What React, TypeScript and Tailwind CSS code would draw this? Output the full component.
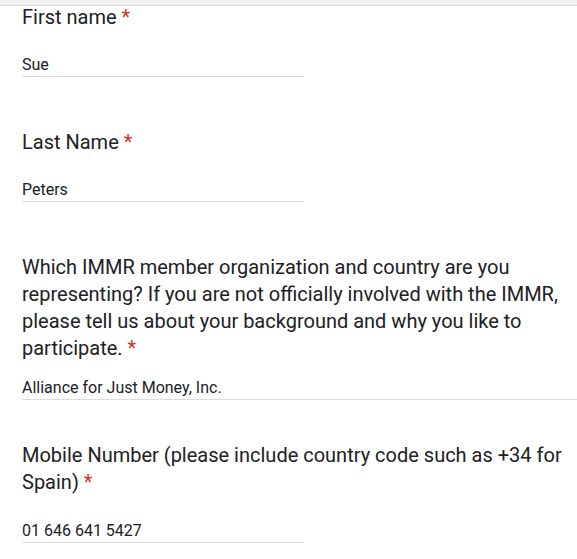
import React from "react";

function Label({ text }: { text: string }) {
  return (
    <div className="text-[20px] leading-[27px] text-[#202124]">
      {text}
      <span className="text-[#d93025]">{"\u00a0*"}</span>
    </div>
  );
}

function Answer({ value, wide }: { value: string; wide?: boolean }) {
  return (
    <div
      className={
        "text-[16px] leading-[20px] pb-[1px] text-[#202124] border-b border-[#dadce0] " +
        (wide ? "w-[555px]" : "w-[282px]")
      }
    >
      {value}
    </div>
  );
}

export default function App() {
  return (
    <div
      className="relative w-[577px] h-[559px] overflow-hidden bg-white"
      style={{ fontFamily: "Roboto, 'Liberation Sans', sans-serif" }}
    >
      {/* sticky header edge */}
      <div className="absolute top-0 left-0 right-0 h-[6px] bg-[#f1f1f1] border-b border-[#dadada] z-10"></div>

      <div className="pl-[22px] pt-[4px] flex flex-col">
        {/* First name */}
        <Label text="First name" />
        <div className="mt-[24px]">
          <Answer value="Sue" />
        </div>

        {/* Last name */}
        <div className="mt-[52px]">
          <Label text="Last Name" />
        </div>
        <div className="mt-[24px]">
          <Answer value="Peters" />
        </div>

        {/* Organization */}
        <div className="mt-[52px] w-[555px]">
          <Label text="Which IMMR member organization and country are you representing? If you are not officially involved with the IMMR, please tell us about your background and why you like to participate." />
        </div>
        <div className="mt-[16px]">
          <Answer value="Alliance for Just Money, Inc." wide />
        </div>

        {/* Mobile */}
        <div className="mt-[42px] w-[555px]">
          <Label text="Mobile Number (please include country code such as +34 for Spain)" />
        </div>
        <div className="mt-[25px]">
          <Answer value="01 646 641 5427" />
        </div>
      </div>
    </div>
  );
}
